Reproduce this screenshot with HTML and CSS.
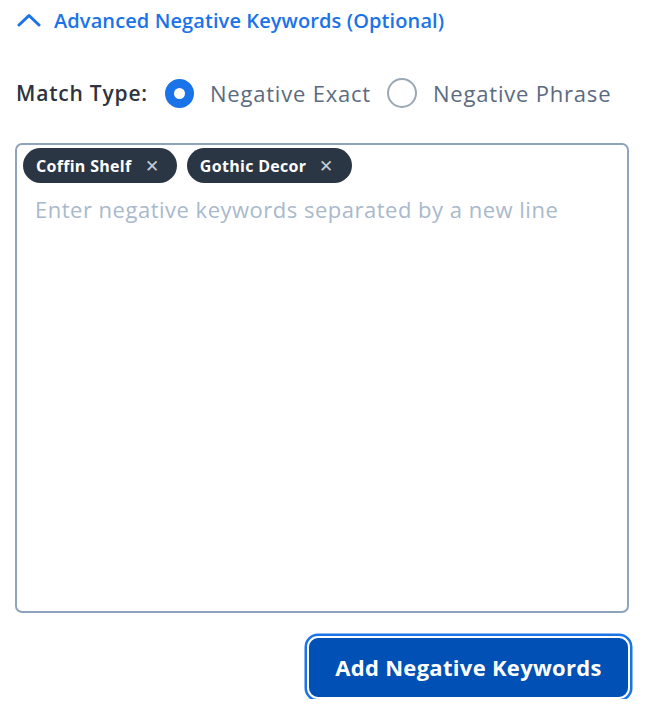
FILE: index.html
```html
<!DOCTYPE html>
<html lang="en">
<head>
    <meta charset="UTF-8">
    <meta name="viewport" content="width=device-width, initial-scale=1.0">
    <title>Negative Keywords</title>
    <link rel="stylesheet" href="styles.css">
</head>
<body>
    <div class="panel">
        <button class="toggle" type="button">
            <svg class="chevron" width="24" height="14" viewBox="0 0 24 14">
                <path d="M2 12 L12 2.5 L22 12" fill="none" stroke="#1a73e8" stroke-width="3" stroke-linecap="round" stroke-linejoin="round"/>
            </svg>
            <span>Advanced Negative Keywords (Optional)</span>
        </button>

        <div class="match-row">
            <span class="match-label">Match Type:</span>
            <label class="radio">
                <input type="radio" name="match" value="exact" checked>
                <span class="dot"></span>
                Negative Exact
            </label>
            <label class="radio">
                <input type="radio" name="match" value="phrase">
                <span class="dot"></span>
                Negative Phrase
            </label>
        </div>

        <div class="keyword-box">
            <div class="chips">
                <span class="chip">Coffin Shelf <span class="chip-x">&#x2715;</span></span>
                <span class="chip">Gothic Decor <span class="chip-x">&#x2715;</span></span>
            </div>
            <textarea placeholder="Enter negative keywords separated by a new line"></textarea>
        </div>

        <div class="actions">
            <button class="add-btn" type="button">Add Negative Keywords</button>
        </div>
    </div>
</body>
</html>
```

FILE: styles.css
```css
body {
    margin: 0;
    font-family: "Open Sans", Lato, sans-serif;
    background: #fff;
}
.panel {
    width: 614px;
    padding: 7px 0 0 15px;
}
.toggle {
    display: flex;
    align-items: center;
    gap: 13px;
    border: none;
    background: none;
    padding: 0 0 0 2px;
    font-family: inherit;
    font-size: 20px;
    font-weight: 600;
    letter-spacing: 0.1px;
    color: #1a73e8;
    height: 26px;
    cursor: pointer;
}
.match-row {
    display: flex;
    align-items: center;
    margin-top: 43px;
    height: 34px;
    font-size: 22px;
    letter-spacing: 0.8px;
}
.match-label {
    font-size: 21px;
    font-weight: 600;
    color: #2d3440;
    margin-right: 17px;
    padding-left: 1px;
}
.radio {
    display: flex;
    align-items: center;
    color: #5b6b7f;
    margin-right: 16px;
}
.radio input {
    display: none;
}
.dot {
    width: 26px;
    height: 26px;
    border: 2px solid #9aa7b6;
    border-radius: 50%;
    margin-right: 16px;
    box-sizing: content-box;
}
.radio input:checked + .dot {
    width: 11px;
    height: 11px;
    border: 9px solid #1a73e8;
}
.keyword-box {
    box-sizing: border-box;
    margin-top: 33px;
    height: 470px;
    border: 2px solid #8ea3bd;
    border-radius: 7px;
    padding: 3px 6px 0 6px;
    display: flex;
    flex-direction: column;
}
.chips {
    display: flex;
    gap: 10px;
}
.chip {
    display: inline-flex;
    align-items: center;
    height: 35px;
    padding: 0 18px 0 13px;
    background: #2b3644;
    color: #fff;
    border-radius: 18px;
    font-size: 16px;
    font-weight: 700;
    letter-spacing: 0.3px;
}
.chip-x {
    font-weight: 400;
    color: #c4ccd6;
    font-size: 17px;
    margin-left: 13px;
}
textarea {
    flex: 1;
    border: none;
    outline: none;
    resize: none;
    font-family: inherit;
    font-size: 22px;
    letter-spacing: 0.5px;
    padding: 11px 0 0 12px;
    color: #2d3440;
}
textarea::placeholder {
    color: #a9b9cb;
}
.actions {
    display: flex;
    justify-content: flex-end;
    margin-top: 23px;
}
.add-btn {
    height: 63px;
    width: 323px;
    margin-right: -1px;
    background: #0050b5;
    color: #fff;
    border: 2px solid #fff;
    border-radius: 11px;
    box-shadow: 0 0 0 2.5px #1a73e8;
    font-family: inherit;
    font-size: 22px;
    font-weight: 700;
    letter-spacing: 0.3px;
    padding-bottom: 2px;
    cursor: pointer;
}
```
